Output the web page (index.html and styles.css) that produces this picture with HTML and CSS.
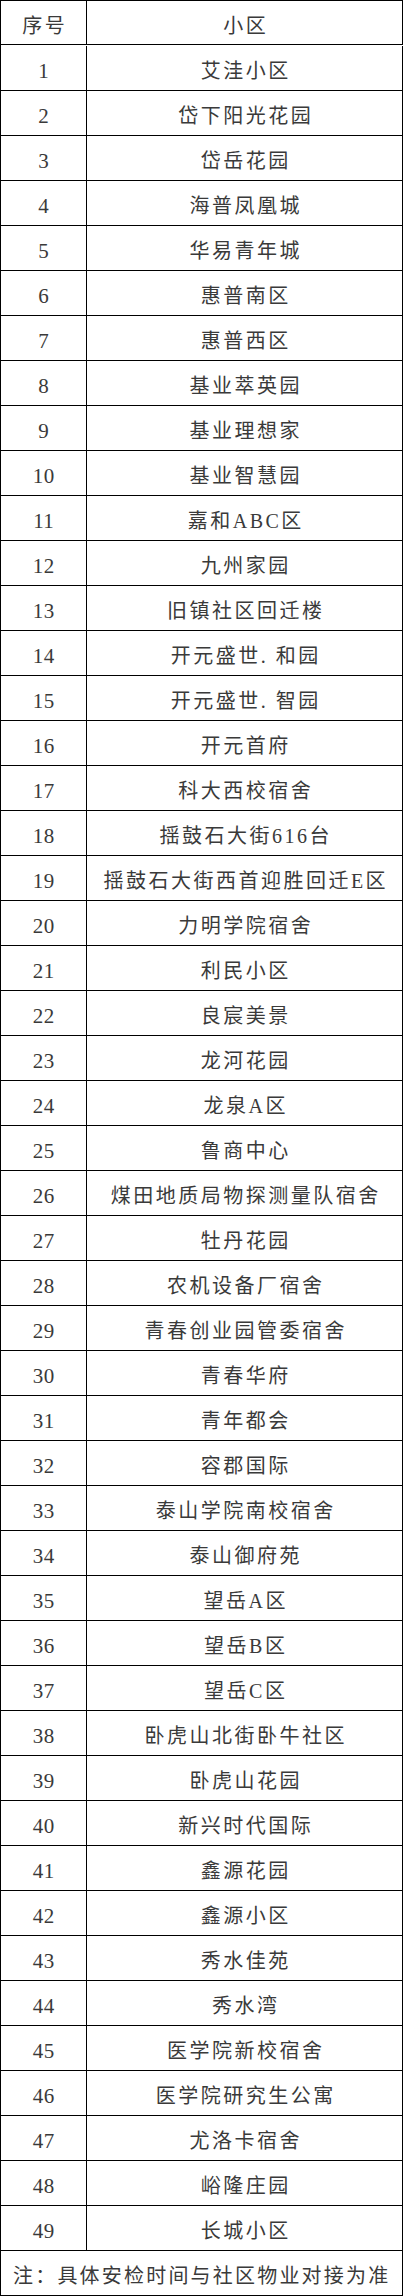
FILE: index.html
```html
<!DOCTYPE html>
<html lang="zh-CN">
<head>
<meta charset="utf-8">
<title>小区安检</title>
<link rel="stylesheet" href="styles.css">
</head>
<body>
<div class="table">
  <div class="cell head num">序号</div><div class="cell head name">小区</div>
  <div class="cell num">1</div><div class="cell name">艾洼小区</div>
  <div class="cell num">2</div><div class="cell name">岱下阳光花园</div>
  <div class="cell num">3</div><div class="cell name">岱岳花园</div>
  <div class="cell num">4</div><div class="cell name">海普凤凰城</div>
  <div class="cell num">5</div><div class="cell name">华易青年城</div>
  <div class="cell num">6</div><div class="cell name">惠普南区</div>
  <div class="cell num">7</div><div class="cell name">惠普西区</div>
  <div class="cell num">8</div><div class="cell name">基业萃英园</div>
  <div class="cell num">9</div><div class="cell name">基业理想家</div>
  <div class="cell num">10</div><div class="cell name">基业智慧园</div>
  <div class="cell num">11</div><div class="cell name">嘉和ABC区</div>
  <div class="cell num">12</div><div class="cell name">九州家园</div>
  <div class="cell num">13</div><div class="cell name">旧镇社区回迁楼</div>
  <div class="cell num">14</div><div class="cell name">开元盛世. 和园</div>
  <div class="cell num">15</div><div class="cell name">开元盛世. 智园</div>
  <div class="cell num">16</div><div class="cell name">开元首府</div>
  <div class="cell num">17</div><div class="cell name">科大西校宿舍</div>
  <div class="cell num">18</div><div class="cell name">揺鼓石大街616台</div>
  <div class="cell num">19</div><div class="cell name">揺鼓石大街西首迎胜回迁E区</div>
  <div class="cell num">20</div><div class="cell name">力明学院宿舍</div>
  <div class="cell num">21</div><div class="cell name">利民小区</div>
  <div class="cell num">22</div><div class="cell name">良宸美景</div>
  <div class="cell num">23</div><div class="cell name">龙河花园</div>
  <div class="cell num">24</div><div class="cell name">龙泉A区</div>
  <div class="cell num">25</div><div class="cell name">鲁商中心</div>
  <div class="cell num">26</div><div class="cell name">煤田地质局物探测量队宿舍</div>
  <div class="cell num">27</div><div class="cell name">牡丹花园</div>
  <div class="cell num">28</div><div class="cell name">农机设备厂宿舍</div>
  <div class="cell num">29</div><div class="cell name">青春创业园管委宿舍</div>
  <div class="cell num">30</div><div class="cell name">青春华府</div>
  <div class="cell num">31</div><div class="cell name">青年都会</div>
  <div class="cell num">32</div><div class="cell name">容郡国际</div>
  <div class="cell num">33</div><div class="cell name">泰山学院南校宿舍</div>
  <div class="cell num">34</div><div class="cell name">泰山御府苑</div>
  <div class="cell num">35</div><div class="cell name">望岳A区</div>
  <div class="cell num">36</div><div class="cell name">望岳B区</div>
  <div class="cell num">37</div><div class="cell name">望岳C区</div>
  <div class="cell num">38</div><div class="cell name">卧虎山北街卧牛社区</div>
  <div class="cell num">39</div><div class="cell name">卧虎山花园</div>
  <div class="cell num">40</div><div class="cell name">新兴时代国际</div>
  <div class="cell num">41</div><div class="cell name">鑫源花园</div>
  <div class="cell num">42</div><div class="cell name">鑫源小区</div>
  <div class="cell num">43</div><div class="cell name">秀水佳苑</div>
  <div class="cell num">44</div><div class="cell name">秀水湾</div>
  <div class="cell num">45</div><div class="cell name">医学院新校宿舍</div>
  <div class="cell num">46</div><div class="cell name">医学院研究生公寓</div>
  <div class="cell num">47</div><div class="cell name">尤洛卡宿舍</div>
  <div class="cell num">48</div><div class="cell name">峪隆庄园</div>
  <div class="cell num">49</div><div class="cell name">长城小区</div>
  <div class="cell note">注：具体安检时间与社区物业对接为准</div>
</div>
</body>
</html>
```
FILE: styles.css
```css
html, body {
  margin: 0;
  padding: 0;
  background: #ffffff;
}

.table {
  display: grid;
  grid-template-columns: 86px 316px;
  grid-auto-rows: 45px;
  width: 403px;
  box-sizing: border-box;
  border-left: 1px solid #000;
  border-top: 1px solid #000;
  font-family: "Liberation Serif", "Noto Sans CJK SC", serif;
  color: #3a3a3a;
}

.cell {
  box-sizing: border-box;
  border-right: 1px solid #000;
  border-bottom: 1px solid #000;
  display: flex;
  align-items: center;
  justify-content: center;
  padding-top: 6px;
  font-size: 20px;
  letter-spacing: 2.5px;
  padding-left: 2.5px;
  white-space: nowrap;
  line-height: 1;
}

.head {
  height: 44px;
}

.num {
  font-size: 21px;
  letter-spacing: 0.5px;
  padding-left: 0.5px;
}

.head.num {
  font-size: 20px;
  letter-spacing: 2.5px;
  padding-left: 2.5px;
}

.note {
  grid-column: 1 / span 2;
  justify-content: flex-start;
  padding-left: 12px;
  letter-spacing: 2.2px;
}
```
